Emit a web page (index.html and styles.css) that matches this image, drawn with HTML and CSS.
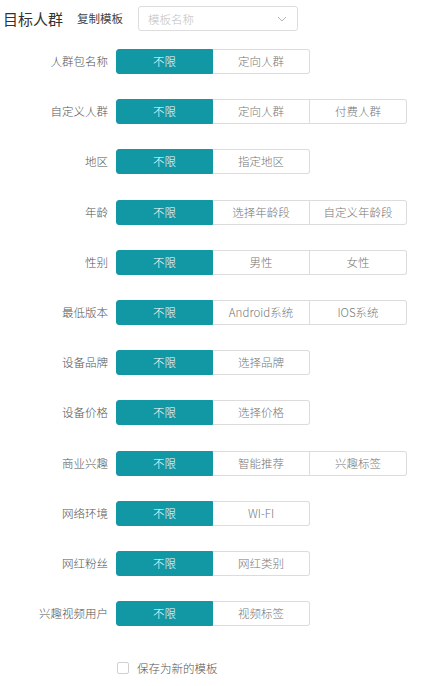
FILE: index.html
```html
<!DOCTYPE html>
<html lang="zh-CN">
<head>
<meta charset="utf-8">
<title>目标人群</title>
<link rel="stylesheet" href="styles.css">
</head>
<body>
<div class="page">
  <div class="header">
    <span class="title">目标人群</span>
    <span class="copy">复制模板</span>
    <div class="select">
      <span class="placeholder">模板名称</span>
      <svg class="chev" width="10" height="6" viewBox="0 0 10 6"><path d="M1 1 L5 5 L9 1" fill="none" stroke="#b5b5b5" stroke-width="1"/></svg>
    </div>
  </div>

  <div class="form">
    <div class="label">人群包名称</div>
    <div class="seg"><span class="opt on">不限</span><span class="opt">定向人群</span></div>

    <div class="label">自定义人群</div>
    <div class="seg"><span class="opt on">不限</span><span class="opt">定向人群</span><span class="opt">付费人群</span></div>

    <div class="label">地区</div>
    <div class="seg"><span class="opt on">不限</span><span class="opt">指定地区</span></div>

    <div class="label">年龄</div>
    <div class="seg"><span class="opt on">不限</span><span class="opt">选择年龄段</span><span class="opt">自定义年龄段</span></div>

    <div class="label">性别</div>
    <div class="seg"><span class="opt on">不限</span><span class="opt">男性</span><span class="opt">女性</span></div>

    <div class="label">最低版本</div>
    <div class="seg"><span class="opt on">不限</span><span class="opt">Android系统</span><span class="opt">IOS系统</span></div>

    <div class="label">设备品牌</div>
    <div class="seg"><span class="opt on">不限</span><span class="opt">选择品牌</span></div>

    <div class="label">设备价格</div>
    <div class="seg"><span class="opt on">不限</span><span class="opt">选择价格</span></div>

    <div class="label">商业兴趣</div>
    <div class="seg"><span class="opt on">不限</span><span class="opt">智能推荐</span><span class="opt">兴趣标签</span></div>

    <div class="label">网络环境</div>
    <div class="seg"><span class="opt on">不限</span><span class="opt">WI-FI</span></div>

    <div class="label">网红粉丝</div>
    <div class="seg"><span class="opt on">不限</span><span class="opt">网红类别</span></div>

    <div class="label">兴趣视频用户</div>
    <div class="seg"><span class="opt on">不限</span><span class="opt">视频标签</span></div>
  </div>

  <label class="save">
    <span class="box"></span>
    <span class="save-text">保存为新的模板</span>
  </label>
</div>
</body>
</html>
```

FILE: styles.css
```css
html, body {
  margin: 0;
  padding: 0;
  background: #ffffff;
}

body {
  font-family: "Noto Sans CJK SC", "Noto Sans", sans-serif;
  font-weight: 300;
  color: #555;
}

.page {
  width: 432px;
  height: 686px;
  overflow: hidden;
}

.header {
  display: flex;
  align-items: center;
  padding: 6px 0 0 3px;
  height: 25px;
}

.title {
  font-size: 15px;
  font-weight: 400;
  color: #333;
  line-height: 25px;
}

.copy {
  font-size: 11.5px;
  font-weight: 400;
  color: #444;
  margin-left: 14px;
  line-height: 25px;
}

.select {
  margin-left: 15px;
  width: 160px;
  height: 25px;
  box-sizing: border-box;
  border: 1px solid #dddddd;
  border-radius: 3px;
  display: flex;
  align-items: center;
  justify-content: space-between;
  padding: 0 10px 0 9px;
}

.placeholder {
  font-size: 11.5px;
  color: #c2c2c2;
}

.chev {
  display: block;
}

.form {
  display: grid;
  grid-template-columns: 108px auto;
  column-gap: 8px;
  row-gap: 25.2px;
  margin-top: 18px;
  justify-items: start;
  align-items: center;
}

.label {
  justify-self: end;
  font-size: 11.5px;
  color: #555;
  line-height: 25px;
}

.seg {
  display: flex;
  height: 25px;
}

.opt {
  width: 97px;
  box-sizing: border-box;
  height: 25px;
  line-height: 23px;
  text-align: center;
  font-size: 11.5px;
  color: #777;
  border: 1px solid #dcdcdc;
  border-left: none;
  background: #fff;
}

.opt:first-child {
  border-left: 1px solid #dcdcdc;
  border-radius: 3px 0 0 3px;
}

.opt:last-child {
  border-radius: 0 3px 3px 0;
}

.opt.on {
  background: #1297a5;
  border-color: #1297a5;
  color: #fff;
}

.save {
  display: flex;
  align-items: center;
  margin: 34px 0 0 117px;
}

.box {
  width: 12px;
  height: 12px;
  box-sizing: border-box;
  border: 1px solid #d0d0d0;
  border-radius: 2px;
  background: #fff;
}

.save-text {
  margin-left: 8px;
  font-size: 11.5px;
  color: #555;
}
```
